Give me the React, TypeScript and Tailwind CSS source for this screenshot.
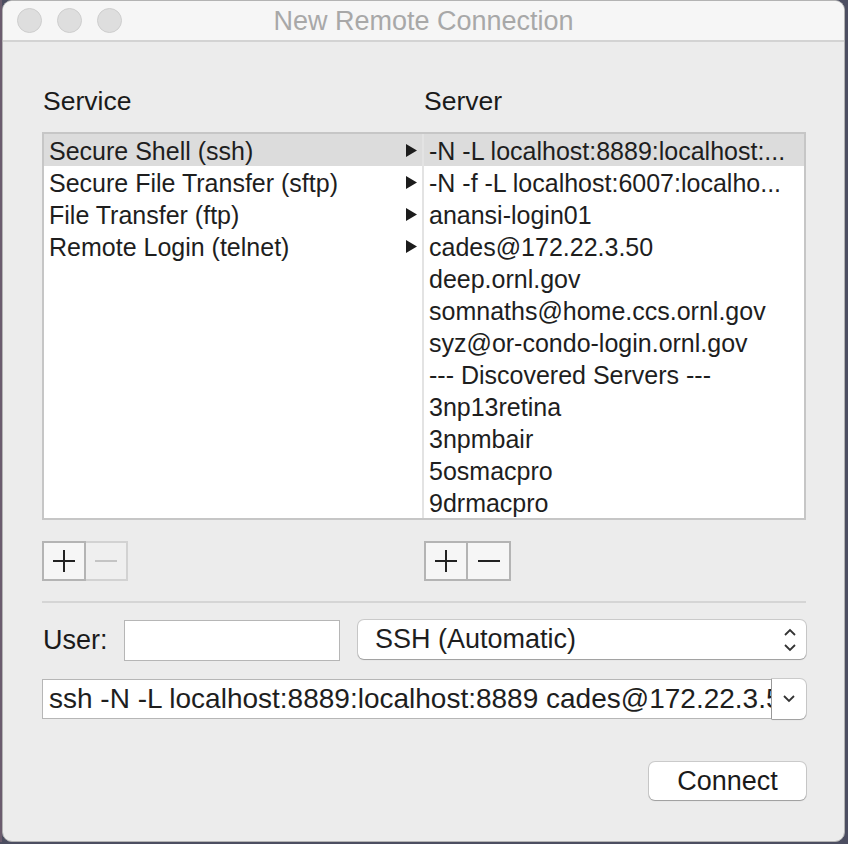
import React from "react";

const services = [
  "Secure Shell (ssh)",
  "Secure File Transfer (sftp)",
  "File Transfer (ftp)",
  "Remote Login (telnet)",
];

const servers = [
  "-N -L localhost:8889:localhost:...",
  "-N -f -L localhost:6007:localho...",
  "anansi-login01",
  "cades@172.22.3.50",
  "deep.ornl.gov",
  "somnaths@home.ccs.ornl.gov",
  "syz@or-condo-login.ornl.gov",
  "--- Discovered Servers ---",
  "3np13retina",
  "3npmbair",
  "5osmacpro",
  "9drmacpro",
];

const font = { fontFamily: '"Liberation Sans", Arial, sans-serif' };

function Arrow() {
  return (
    <svg width="11" height="13" viewBox="0 0 11 13">
      <polygon points="0,0 11,6.5 0,13" fill="#1c1c1c" />
    </svg>
  );
}

function Plus({ color = "#222" }: { color?: string }) {
  return (
    <svg width="22" height="22" viewBox="0 0 22 22">
      <rect x="10" y="0" width="2" height="22" fill={color} />
      <rect x="0" y="10" width="22" height="2" fill={color} />
    </svg>
  );
}

function Minus({ color = "#222" }: { color?: string }) {
  return (
    <svg width="22" height="22" viewBox="0 0 22 22">
      <rect x="0" y="10" width="22" height="2" fill={color} />
    </svg>
  );
}

function PlusMinus({ minusDisabled }: { minusDisabled?: boolean }) {
  return (
    <div className="flex h-[40px]">
      <div className="w-[44px] h-full flex items-center justify-center bg-[#f6f6f6] border-2 border-[#b4b4b4]">
        <Plus />
      </div>
      {minusDisabled ? (
        <div className="w-[42px] h-full flex items-center justify-center bg-[#efefef] border-2 border-l-0 border-[#d2d2d2]">
          <Minus color="#c4c4c4" />
        </div>
      ) : (
        <div className="w-[43px] h-full flex items-center justify-center bg-[#f6f6f6] border-2 border-l-0 border-[#b4b4b4]">
          <Minus />
        </div>
      )}
    </div>
  );
}

export default function App() {
  return (
    <div className="w-[848px] h-[844px] bg-[#4c4e61] overflow-hidden flex" style={font}>
      <div className="w-[2px] h-[842px] bg-[#6b5c6e]" />
      <div className="w-[843px] h-[842px] rounded-[10px] bg-[#ececec] border border-[#b3b3b3] overflow-hidden flex flex-col">
        {/* Title bar */}
        <div className="h-[41px] shrink-0 bg-[#f6f6f6] border-b-2 border-[#d3d3d3] flex items-center relative">
          <div className="flex gap-[15px] pl-[14px]">
            <div className="w-[25px] h-[25px] rounded-full bg-[#dedede] border border-[#cdcdcd]" />
            <div className="w-[25px] h-[25px] rounded-full bg-[#dedede] border border-[#cdcdcd]" />
            <div className="w-[25px] h-[25px] rounded-full bg-[#dedede] border border-[#cdcdcd]" />
          </div>
          <div className="absolute inset-0 flex items-center justify-center text-[27px] text-[#a8a8a8] pt-[1px]">
            New Remote Connection
          </div>
        </div>

        {/* Body */}
        <div className="pl-[39px] pr-[38px] pt-[44px] flex flex-col">
          <div className="flex h-[32px] items-center text-[26.5px] text-[#1a1a1a]">
            <div className="w-[382px] pl-[1px]">Service</div>
            <div>Server</div>
          </div>

          <div className="mt-[14px] h-[388px] border-2 border-[#c6c6c6] bg-white flex">
            <div className="w-[378px] flex flex-col">
              {services.map((s, i) => (
                <div
                  key={s}
                  className={`h-[32px] flex items-center justify-between pl-[5px] pr-[5px] pt-[3px] text-[25px] text-[#1e1e1e] whitespace-nowrap ${
                    i === 0 ? "bg-[#dcdcdc]" : ""
                  }`}
                >
                  <span>{s}</span>
                  <span className="-mt-[3px] flex">
                    <Arrow />
                  </span>
                </div>
              ))}
            </div>
            <div className="w-[2px] bg-[#e3e3e3]" />
            <div className="flex-1 flex flex-col">
              {servers.map((s, i) => (
                <div
                  key={s}
                  className={`h-[32px] flex items-center pl-[5px] pt-[3px] text-[25px] text-[#1e1e1e] whitespace-nowrap overflow-hidden ${
                    i === 0 ? "bg-[#dcdcdc]" : ""
                  }`}
                >
                  {s}
                </div>
              ))}
            </div>
          </div>

          <div className="mt-[21px] flex">
            <div className="w-[382px]">
              <PlusMinus minusDisabled />
            </div>
            <PlusMinus />
          </div>

          <div className="mt-[20px] h-[2px] bg-[#d5d5d5]" />

          {/* User row */}
          <div className="mt-[17px] flex items-start">
            <div className="h-[41px] flex items-center text-[27px] text-[#1a1a1a] w-[82px] pl-[1px]">User:</div>
            <div className="w-[216px] h-[41px] bg-white border border-[#b6b6b6]" />
            <div className="ml-[18px] flex-1 h-[39px] bg-white rounded-[6px] shadow-[0_0_0_1px_rgba(0,0,0,0.14),0_1px_1px_rgba(0,0,0,0.22)] flex items-center justify-between pl-[17px] pr-[9px] text-[27px] text-[#1e1e1e]">
              <span>SSH (Automatic)</span>
              <svg width="14" height="26" viewBox="0 0 14 26" fill="none" stroke="#333" strokeWidth="1.8">
                <polyline points="2,8 7,3 12,8" />
                <polyline points="2,18 7,23 12,18" />
              </svg>
            </div>
          </div>

          {/* Command combo */}
          <div className="mt-[18px] h-[40px] flex">
            <div className="flex-1 h-full bg-white border border-[#b6b6b6] overflow-hidden flex items-center pl-[6px] text-[28px] text-[#1e1e1e] whitespace-nowrap">
              ssh -N -L localhost:8889:localhost:8889 cades@172.22.3.50
            </div>
            <div className="w-[34px] h-full bg-white rounded-r-[6px] shadow-[0_0_0_1px_rgba(0,0,0,0.14),0_1px_1px_rgba(0,0,0,0.22)] flex items-center justify-center">
              <svg width="14" height="10" viewBox="0 0 14 10" fill="none" stroke="#333" strokeWidth="1.8">
                <polyline points="2,2 7,7 12,2" />
              </svg>
            </div>
          </div>

          <div className="mt-[43px] flex justify-end">
            <div className="w-[157px] h-[38px] bg-white rounded-[6px] shadow-[0_0_0_1px_rgba(0,0,0,0.14),0_1px_1px_rgba(0,0,0,0.22)] flex items-center justify-center text-[27px] text-[#1a1a1a]">
              Connect
            </div>
          </div>
        </div>
      </div>
    </div>
  );
}
